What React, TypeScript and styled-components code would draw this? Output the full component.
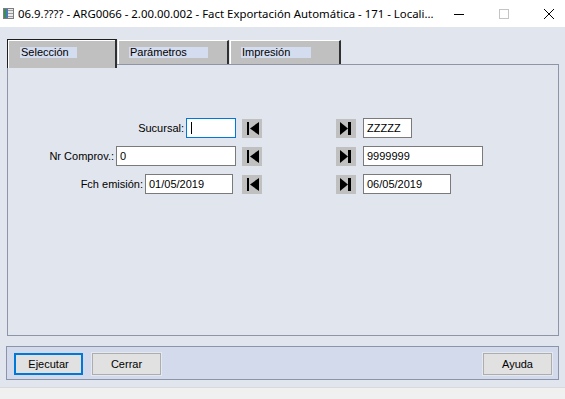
import React from 'react';
import styled, { createGlobalStyle } from 'styled-components';

const GlobalStyle = createGlobalStyle`
  html, body {
    margin: 0;
    padding: 0;
    background: #ffffff;
  }
  body {
    font-family: "Liberation Sans", Arial, sans-serif;
    color: #000;
  }
`;

const Window = styled.div`
  width: 565px;
  height: 399px;
  display: flex;
  flex-direction: column;
  overflow: hidden;
`;

const TitleBar = styled.div`
  height: 27px;
  flex: none;
  display: flex;
  align-items: center;
  background: #ffffff;
  padding-left: 3px;
`;

const TitleText = styled.div`
  font-family: "Noto Sans", "Open Sans", sans-serif;
  font-size: 11.4px;
  margin-left: 4px;
  white-space: nowrap;
  overflow: hidden;
  min-width: 0;
  color: #000;
`;

const Controls = styled.div`
  flex: none;
  margin-left: auto;
  margin-right: 11px;
  display: flex;
  align-items: center;
  gap: 35px;
`;

const Client = styled.div`
  height: 360px;
  flex: none;
  background: #e1e5ee;
  display: flex;
  flex-direction: column;
  padding-top: 12px;
  box-sizing: border-box;
`;

const TabStrip = styled.div`
  display: flex;
  align-items: flex-end;
  gap: 1px;
  padding-left: 7px;
`;

const Tab = styled.div<{ $active?: boolean; $w: number }>`
  width: ${(p) => p.$w}px;
  height: ${(p) => (p.$active ? 29 : 24)}px;
  margin-bottom: ${(p) => (p.$active ? -4 : 0)}px;
  position: relative;
  z-index: ${(p) => (p.$active ? 1 : 0)};
  box-sizing: border-box;
  background: #c0c0c0;
  border-top: 1px solid ${(p) => (p.$active ? '#1e1e1e' : '#ffffff')};
  border-left: 1px solid ${(p) => (p.$active ? '#1e1e1e' : '#ffffff')};
  border-right: 2px solid #303030;
  box-shadow: ${(p) => (p.$active ? 'inset 1px 1px 0 #ffffff' : 'none')};
  padding-top: ${(p) => (p.$active ? 7 : 6)}px;
  padding-left: ${(p) => (p.$active ? 12 : 10)}px;
`;

const TabLabel = styled.div<{ $w: number }>`
  width: ${(p) => p.$w}px;
  height: 11px;
  line-height: 11px;
  font-size: 11px;
  background: #d4dcef;
  padding-left: 1px;
  box-sizing: border-box;
  white-space: nowrap;
`;

const Panel = styled.div`
  margin-left: 7px;
  width: 552px;
  height: 272px;
  flex: none;
  box-sizing: border-box;
  border: 1px solid #8d95a7;
  padding-top: 53px;
`;

const Form = styled.div`
  display: flex;
  flex-direction: column;
  gap: 8px;
`;

const Row = styled.div`
  display: grid;
  grid-template-columns: 228px 20px 62px 20px 1fr;
  column-gap: 6px;
  height: 20px;
  align-items: center;
`;

const LeftCell = styled.div<{ $trail?: number }>`
  display: flex;
  justify-content: flex-end;
  align-items: center;
  gap: 2px;
  padding-right: ${(p) => p.$trail ?? 0}px;
`;

const Label = styled.span`
  font-size: 11px;
  white-space: nowrap;
`;

const Input = styled.div<{ $w: number; $focus?: boolean; $shift?: number }>`
  width: ${(p) => p.$w}px;
  height: 20px;
  box-sizing: border-box;
  background: #ffffff;
  border: 1px solid ${(p) => (p.$focus ? '#0078d7' : '#7a7a7a')};
  font-size: 11px;
  line-height: 18px;
  padding-left: 3px;
  margin-left: ${(p) => p.$shift ?? 0}px;
  display: flex;
  align-items: center;
  white-space: nowrap;
`;

const Caret = styled.span`
  display: inline-block;
  width: 1px;
  height: 12px;
  background: #000;
  margin-left: 1px;
`;

const NavButton = styled.div<{ $col?: number }>`
  grid-column: ${(p) => p.$col ?? 'auto'};
  width: 20px;
  height: 19px;
  background: #c0c0c0;
  display: flex;
  align-items: center;
  justify-content: center;
`;

const ButtonBar = styled.div`
  margin: 10px 0 0 6px;
  width: 553px;
  height: 34px;
  flex: none;
  box-sizing: border-box;
  background: #d2daeb;
  border: 1px solid #8c95a8;
  display: flex;
  align-items: flex-start;
  padding: 6px 6px 0 7px;
  gap: 9px;
`;

const Button = styled.div<{ $default?: boolean; $right?: boolean }>`
  width: 69px;
  height: 22px;
  box-sizing: border-box;
  background: #e1e1e1;
  border: ${(p) => (p.$default ? '2px solid #0078d7' : '1px solid #adadad')};
  box-shadow: ${(p) => (p.$default ? 'none' : '0 0 0 1px #e4e8f1')};
  font-size: 11px;
  display: flex;
  align-items: center;
  justify-content: center;
  margin-left: ${(p) => (p.$right ? 'auto' : '0')};
`;

const Footer = styled.div`
  flex: 1;
  background: #f0f0f0;
  border-top: 1px solid #d9d9d9;
`;

const AppIcon = () => (
  <svg width="11" height="11" viewBox="0 0 11 11">
    <rect x="0.5" y="0.5" width="10" height="10" fill="#e8e8e8" stroke="#7d7d7d" />
    <rect x="1" y="1" width="2" height="9" fill="#3c8c5c" />
    <rect x="3" y="1" width="2" height="9" fill="#4a78b8" />
    <rect x="5" y="2" width="5" height="1" fill="#9a9a9a" />
    <rect x="5" y="5" width="5" height="1" fill="#9a9a9a" />
    <rect x="5" y="8" width="5" height="1" fill="#9a9a9a" />
  </svg>
);

const MinIcon = () => (
  <svg width="10" height="10" viewBox="0 0 10 10">
    <rect x="0" y="5" width="10" height="1" fill="#000" />
  </svg>
);

const MaxIcon = () => (
  <svg width="10" height="10" viewBox="0 0 10 10">
    <rect x="0.5" y="0.5" width="9" height="9" fill="none" stroke="#c4c4c4" />
  </svg>
);

const CloseIcon = () => (
  <svg width="10" height="10" viewBox="0 0 10 10">
    <path d="M0 0 L10 10 M10 0 L0 10" stroke="#000" strokeWidth="1" />
  </svg>
);

const FirstIcon = () => (
  <svg width="20" height="19" viewBox="0 0 20 19">
    <rect x="5" y="3" width="2" height="13" fill="#000" />
    <polygon points="17,3 8,9.5 17,16" fill="#000" />
  </svg>
);

const LastIcon = () => (
  <svg width="20" height="19" viewBox="0 0 20 19">
    <polygon points="4,3 12,9.5 4,16" fill="#000" />
    <rect x="12" y="3" width="3" height="13" fill="#000" />
  </svg>
);

const rows = [
  { label: 'Sucursal:', from: '', fromW: 50, trail: 0, to: 'ZZZZZ', toW: 49, focus: true },
  { label: 'Nr Comprov.:', from: '0', fromW: 120, trail: 0, to: '9999999', toW: 120, focus: false },
  { label: 'Fch emisión:', from: '01/05/2019', fromW: 88, trail: 3, to: '06/05/2019', toW: 88, focus: false },
];

const App = () => (
  <>
    <GlobalStyle />
    <Window>
      <TitleBar>
        <AppIcon />
        <TitleText>06.9.???? - ARG0066 - 2.00.00.002 - Fact Exportación Automática - 171 - Locali...</TitleText>
        <Controls>
          <MinIcon />
          <MaxIcon />
          <CloseIcon />
        </Controls>
      </TitleBar>
      <Client>
        <TabStrip>
          <Tab $active $w={110}>
            <TabLabel $w={57}>Selección</TabLabel>
          </Tab>
          <Tab $w={111}>
            <TabLabel $w={79}>Parámetros</TabLabel>
          </Tab>
          <Tab $w={111}>
            <TabLabel $w={70}>Impresión</TabLabel>
          </Tab>
        </TabStrip>
        <Panel>
          <Form>
            {rows.map((r) => (
              <Row key={r.label}>
                <LeftCell $trail={r.trail}>
                  <Label>{r.label}</Label>
                  <Input $w={r.fromW} $focus={r.focus}>
                    {r.focus ? <Caret /> : r.from}
                  </Input>
                </LeftCell>
                <NavButton>
                  <FirstIcon />
                </NavButton>
                <NavButton $col={4}>
                  <LastIcon />
                </NavButton>
                <Input $w={r.toW} $shift={1}>
                  {r.to}
                </Input>
              </Row>
            ))}
          </Form>
        </Panel>
        <ButtonBar>
          <Button $default>Ejecutar</Button>
          <Button>Cerrar</Button>
          <Button $right>Ayuda</Button>
        </ButtonBar>
      </Client>
      <Footer />
    </Window>
  </>
);

export default App;
